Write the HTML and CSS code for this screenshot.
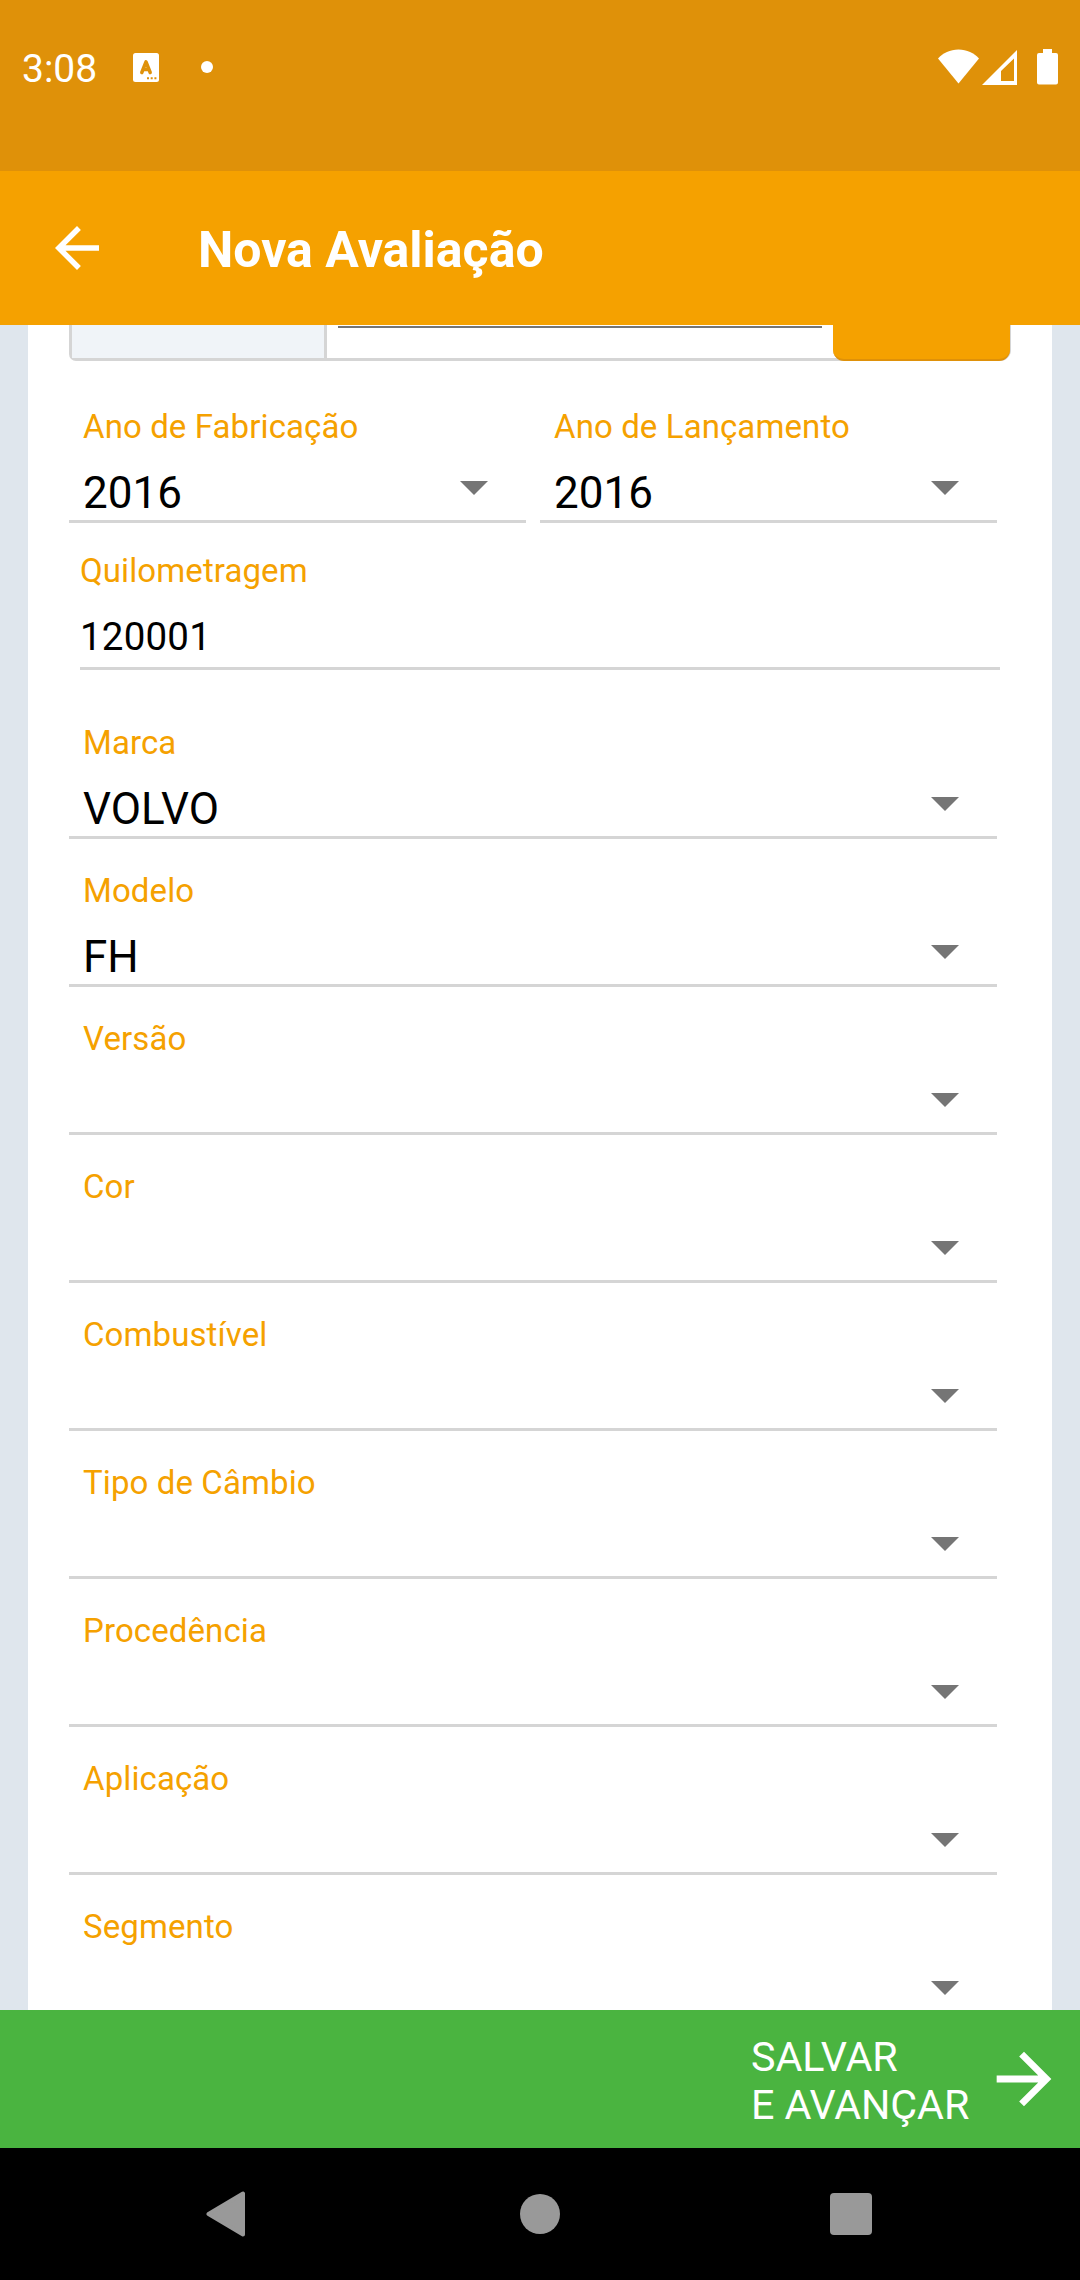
FILE: index.html
```html
<!DOCTYPE html>
<html lang="pt-BR">
<head>
<meta charset="utf-8">
<title>Nova Avaliação</title>
<link rel="stylesheet" href="styles.css">
</head>
<body>
<div class="screen">
  <div class="status-bar">
    <span class="clock">3:08</span>
    <svg class="app-icon" width="26" height="29" viewBox="0 0 26 29"><rect width="26" height="29" rx="2.5" fill="#fff"/><path d="M8.8 19.5 13 8.8l4.200 10.700M10 16.400h6" fill="none" stroke="#df9109" stroke-width="3.500" stroke-linecap="round" stroke-linejoin="round"/><path d="M14 24.200h2v2h-2zM17.700 24.200h2v2h-2zM21.400 24.200h2v2h-2z" fill="#df9109"/></svg>
    <span class="dot"></span>
    <div class="status-icons">
      <svg width="41" height="35" viewBox="0 0 41 35"><path d="M20.500 34.500 0 9.500C5 4.200 12 .500 20.500.500S36 4.200 41 9.500z" fill="#fff"/></svg>
      <svg class="signal" width="35" height="35" viewBox="0 0 35 35"><path fill-rule="evenodd" d="M35 0v35H0zM32 8.500 19 21v10h13z" fill="#fff"/></svg>
      <svg class="battery" width="21" height="36" viewBox="0 0 21 36"><path d="M6 0h9v4h4a2 2 0 0 1 2 2v27.500a2 2 0 0 1-2 2H2a2 2 0 0 1-2-2V6a2 2 0 0 1 2-2h4z" fill="#fff"/></svg>
    </div>
  </div>
  <header class="app-bar">
    <svg class="back" width="66" height="66" viewBox="0 0 24 24"><path d="M20 11H7.830l5.590-5.590L12 4l-8 8 8 8 1.410-1.410L7.830 13H20z" fill="#fff"/></svg>
    <h1 class="title">Nova Avaliação</h1>
  </header>
  <main class="content">
    <div class="card">
      <div class="search-row">
        <div class="prefix"></div>
        <div class="search-field"><div class="search-line"></div></div>
        <div class="search-button"></div>
      </div>
      <div class="pair">
        <div class="field"><div class="label">Ano de Fabricação</div><div class="value">2016</div><i class="caret"></i></div>
        <div class="field"><div class="label">Ano de Lançamento</div><div class="value">2016</div><i class="caret"></i></div>
      </div>
      <div class="text-field"><div class="label">Quilometragem</div><div class="text-value">120001</div></div>
      <div class="field"><div class="label">Marca</div><div class="value">VOLVO</div><i class="caret"></i></div>
      <div class="field"><div class="label">Modelo</div><div class="value">FH</div><i class="caret"></i></div>
      <div class="field"><div class="label">Versão</div><div class="value"></div><i class="caret"></i></div>
      <div class="field"><div class="label">Cor</div><div class="value"></div><i class="caret"></i></div>
      <div class="field"><div class="label">Combustível</div><div class="value"></div><i class="caret"></i></div>
      <div class="field"><div class="label">Tipo de Câmbio</div><div class="value"></div><i class="caret"></i></div>
      <div class="field"><div class="label">Procedência</div><div class="value"></div><i class="caret"></i></div>
      <div class="field"><div class="label">Aplicação</div><div class="value"></div><i class="caret"></i></div>
      <div class="field"><div class="label">Segmento</div><div class="value"></div><i class="caret"></i></div>
    </div>
  </main>
  <footer class="save-bar">
    <div class="save-text">SALVAR<br>E AVANÇAR</div>
    <svg width="82" height="82" viewBox="0 0 24 24"><path d="m12 4-1.410 1.410L16.170 11H4v2h12.170l-5.580 5.590L12 20l8-8z" fill="#fff"/></svg>
  </footer>
  <nav class="nav-bar">
    <svg width="40" height="46" viewBox="0 0 40 46"><path d="M37 2.500v41L2.500 23z" fill="#999" stroke="#999" stroke-width="4" stroke-linejoin="round"/></svg>
    <span class="home"></span>
    <span class="recents"></span>
  </nav>
</div>
</body>
</html>
```
FILE: styles.css
```css
* { box-sizing: border-box; }
body { margin: 0; font-family: Roboto, "Liberation Sans", sans-serif; }
svg { display: block; flex: none; }

.screen {
  width: 1080px;
  height: 2280px;
  display: flex;
  flex-direction: column;
  overflow: hidden;
}

.status-bar {
  flex: none;
  height: 171px;
  padding: 49px 22px 0;
  display: flex;
  align-items: flex-start;
  background: #df9109;
  color: #fff;
}
.clock { width: 111px; font-size: 39px; line-height: 41px; }
.app-icon { margin-top: 4px; }
.dot { width: 12px; height: 12px; margin: 12px 0 0 42px; border-radius: 50%; background: #fff; }
.status-icons { display: flex; margin-left: auto; }
.signal { margin: 1px 0 0 3px; }
.battery { margin-left: 20px; }

.app-bar {
  flex: none;
  height: 154px;
  padding-left: 44px;
  display: flex;
  align-items: center;
  background: #f5a100;
  color: #fff;
}
.title { margin: 4px 0 0 88px; font-size: 50px; line-height: 60px; font-weight: 700; }

.content {
  flex: 1;
  min-height: 0;
  overflow: hidden;
  padding: 0 28px;
  background: #dfe6ed;
}
.card { padding: 0 41px; background: #fff; }

.search-row {
  display: flex;
  width: 941px;
  height: 36px;
  margin-bottom: 14px;
  border: solid #d5d5d5;
  border-width: 0 0 3px 3px;
  border-radius: 0 0 10px 7px;
}
.prefix { width: 252px; background: #f0f4f8; }
.search-field { width: 509px; padding: 1px 11px 0 11px; border-left: 3px solid #d5d5d5; }
.search-line { height: 2px; background: #757575; }
.search-button {
  width: 177px;
  height: 36px;
  border-bottom: 2px solid #df9109;
  border-radius: 0 0 11px 11px;
  background: #f5a100;
  box-shadow: 1px 0 0 #d5d5d5;
}

.pair { display: grid; grid-template-columns: 457px 457px; gap: 14px; }
.field {
  position: relative;
  width: 928px;
  height: 148px;
  padding: 32px 14px 0;
  border-bottom: 3px solid #d5d5d5;
}
.pair .field { width: auto; }
.label { height: 39px; font-size: 33px; line-height: 39px; letter-spacing: 0.1px; color: #f5a100; }
.value { height: 52px; margin-top: 21px; font-size: 44px; line-height: 52px; color: #000; }
.caret {
  position: absolute;
  right: 38px;
  bottom: 25px;
  width: 28px;
  height: 14px;
  background: #757575;
  clip-path: polygon(0 0, 100% 0, 50% 100%);
}
.text-field {
  width: 920px;
  height: 147px;
  margin: 0 0 21px 11px;
  padding-top: 28px;
  border-bottom: 3px solid #d5d5d5;
}
.text-value { margin-top: 24px; font-size: 38.5px; line-height: 46px; letter-spacing: 0.2px; color: #000; }

.save-bar {
  flex: none;
  height: 138px;
  padding-right: 15px;
  display: flex;
  align-items: center;
  justify-content: flex-end;
  background: #4ab440;
  color: #fff;
}
.save-text { width: 232px; margin-top: 3px; font-size: 41.25px; line-height: 48px; letter-spacing: -0.1px; }

.nav-bar {
  flex: none;
  height: 132px;
  padding: 0 208px 0 206px;
  display: flex;
  align-items: center;
  justify-content: space-between;
  background: #000;
}
.home { width: 40px; height: 40px; margin-left: 3px; border-radius: 50%; background: #999; }
.recents { width: 42px; height: 42px; border-radius: 4px; background: #999; }
```
